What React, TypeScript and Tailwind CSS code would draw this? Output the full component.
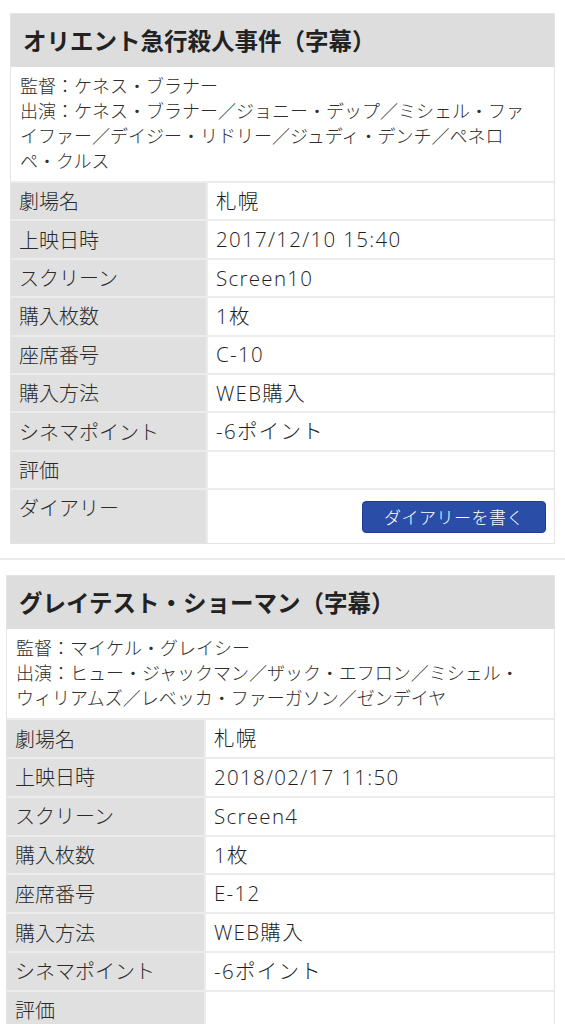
import React from 'react';

type Row = { label: string; value: string };

type Movie = {
  title: string;
  director: string;
  castLines: string[];
  rows: Row[];
  diary: boolean;
};

const movies: Movie[] = [
  {
    title: 'オリエント急行殺人事件（字幕）',
    director: '監督：ケネス・ブラナー',
    castLines: [
      '出演：ケネス・ブラナー／ジョニー・デップ／ミシェル・ファ',
      'イファー／デイジー・リドリー／ジュディ・デンチ／ペネロ',
      'ペ・クルス',
    ],
    rows: [
      { label: '劇場名', value: '札幌' },
      { label: '上映日時', value: '2017/12/10 15:40' },
      { label: 'スクリーン', value: 'Screen10' },
      { label: '購入枚数', value: '1枚' },
      { label: '座席番号', value: 'C-10' },
      { label: '購入方法', value: 'WEB購入' },
      { label: 'シネマポイント', value: '-6ポイント' },
      { label: '評価', value: '' },
    ],
    diary: true,
  },
  {
    title: 'グレイテスト・ショーマン（字幕）',
    director: '監督：マイケル・グレイシー',
    castLines: [
      '出演：ヒュー・ジャックマン／ザック・エフロン／ミシェル・',
      'ウィリアムズ／レベッカ・ファーガソン／ゼンデイヤ',
    ],
    rows: [
      { label: '劇場名', value: '札幌' },
      { label: '上映日時', value: '2018/02/17 11:50' },
      { label: 'スクリーン', value: 'Screen4' },
      { label: '購入枚数', value: '1枚' },
      { label: '座席番号', value: 'E-12' },
      { label: '購入方法', value: 'WEB購入' },
      { label: 'シネマポイント', value: '-6ポイント' },
      { label: '評価', value: '' },
    ],
    diary: true,
  },
];

const valueFont = { fontFamily: '"Open Sans", "Noto Sans CJK JP", sans-serif' };

const labelClass =
  'flex shrink-0 items-center bg-[#e0e0e0] pl-[8px] text-[20px] font-light text-[#2a2a2a]';
const valueClass =
  'flex flex-1 items-center border-l-2 border-[#ececec] bg-white pl-[8px] text-[20.5px] font-light tracking-[1.3px] text-[#1e1e1e]';

function MovieCard({ movie, variant }: { movie: Movie; variant: 'first' | 'second' }) {
  const first = variant === 'first';
  const labelW = first ? 'w-[195px]' : 'w-[197px]';
  const rowH = first ? 'h-[38.4px]' : 'h-[38.8px]';

  return (
    <section
      className={`border border-[#e4e4e4] bg-white ${first ? 'ml-[10px] w-[545px]' : 'ml-[6px] w-[549px]'}`}
    >
      <h2 className="flex h-[53px] items-center bg-[#dddddd] pl-[12px] text-[23.5px] font-bold text-[#222]">
        {movie.title}
      </h2>
      <div className="px-[9px] pb-[8px] pt-[6px] text-[18px] font-light leading-[25px] text-[#2e2e2e]">
        <div className="whitespace-nowrap">{movie.director}</div>
        {movie.castLines.map(line => (
          <div key={line} className="whitespace-nowrap">
            {line}
          </div>
        ))}
      </div>
      {movie.rows.map(row => (
        <div key={row.label} className={`flex border-t-2 border-[#ececec] ${rowH}`}>
          <div className={`${labelClass} ${labelW}`}>{row.label}</div>
          <div className={valueClass} style={valueFont}>
            {row.value}
          </div>
        </div>
      ))}
      {movie.diary && (
        <div className="flex h-[55px] border-t-2 border-[#ececec]">
          <div
            className={`shrink-0 bg-[#e0e0e0] pl-[8px] pt-[3px] text-[20px] font-light text-[#2a2a2a] ${labelW}`}
          >
            ダイアリー
          </div>
          <div className="flex flex-1 justify-end border-l-2 border-[#ececec] bg-white pr-[8px] pt-[11px]">
            <button
              type="button"
              className="h-[32px] w-[184px] rounded-[4px] border border-[#1d3d8f] bg-[#2a4ea8] text-[17px] font-light tracking-[0.5px] text-white"
            >
              ダイアリーを書く
            </button>
          </div>
        </div>
      )}
    </section>
  );
}

export default function App() {
  return (
    <div
      className="h-[1024px] w-[565px] overflow-hidden bg-white pt-[13px]"
      style={{ fontFamily: '"Noto Sans CJK JP", "Noto Sans", sans-serif' }}
    >
      <MovieCard movie={movies[0]} variant="first" />
      <div className="mb-[15px] mt-[14px] h-[2px] bg-[#ebebeb]" />
      <MovieCard movie={movies[1]} variant="second" />
    </div>
  );
}
